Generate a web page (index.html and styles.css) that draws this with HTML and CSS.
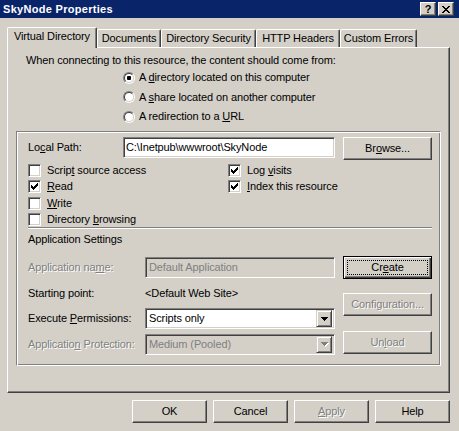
FILE: index.html
```html
<!DOCTYPE html>
<html>
<head>
<meta charset="utf-8">
<title>SkyNode Properties</title>
<link rel="stylesheet" href="styles.css">
</head>
<body>
<div class="window">
  <div class="titlebar">
    <span class="title">SkyNode Properties</span>
    <div class="caption-btns">
      <span class="cbtn cbtn-help">?</span>
      <span class="cbtn">
        <svg class="ico" width="8" height="7" viewBox="0 0 8 7">
          <rect x="0" y="0" width="2" height="1"/><rect x="6" y="0" width="2" height="1"/>
          <rect x="1" y="1" width="2" height="1"/><rect x="5" y="1" width="2" height="1"/>
          <rect x="2" y="2" width="4" height="1"/>
          <rect x="3" y="3" width="2" height="1"/>
          <rect x="2" y="4" width="4" height="1"/>
          <rect x="1" y="5" width="2" height="1"/><rect x="5" y="5" width="2" height="1"/>
          <rect x="0" y="6" width="2" height="1"/><rect x="6" y="6" width="2" height="1"/>
        </svg>
      </span>
    </div>
  </div>

  <div class="tabs">
    <div class="tab tab-active tab-vd">Virtual Directory</div>
    <div class="tab tab-docs">Documents</div>
    <div class="tab tab-sec">Directory Security</div>
    <div class="tab tab-http">HTTP Headers</div>
    <div class="tab tab-err">Custom Errors</div>
  </div>

  <div class="panel">
    <div class="intro">When connecting to this resource, the content should come from:</div>
    <div class="radios">
      <div class="radio-row"><span class="radio"><span class="radio-in"><span class="dot"></span></span></span><span>A <u>d</u>irectory located on this computer</span></div>
      <div class="radio-row"><span class="radio"><span class="radio-in"></span></span><span>A <u>s</u>hare located on another computer</span></div>
      <div class="radio-row"><span class="radio"><span class="radio-in"></span></span><span>A redirection to a <u>U</u>RL</span></div>
    </div>

    <div class="group">
      <div class="path-row">
        <span class="path-label">Lo<u>c</u>al Path:</span>
        <div class="field path-field">C:\Inetpub\wwwroot\SkyNode</div>
        <div class="btn btn-wide">Br<u>o</u>wse...</div>
      </div>

      <div class="checks">
        <div class="check-row"><span class="check"></span><span>Scrip<u>t</u> source access</span></div>
        <div class="check-row"><span class="check checked"><svg class="ico" width="7" height="7" viewBox="0 0 7 7"><rect x="6" y="0" width="1" height="1"/><rect x="5" y="1" width="2" height="1"/><rect x="0" y="2" width="1" height="1"/><rect x="4" y="2" width="3" height="1"/><rect x="0" y="3" width="2" height="1"/><rect x="3" y="3" width="3" height="1"/><rect x="0" y="4" width="5" height="1"/><rect x="1" y="5" width="3" height="1"/><rect x="2" y="6" width="1" height="1"/></svg></span><span>Log <u>v</u>isits</span></div>
        <div class="check-row"><span class="check checked"><svg class="ico" width="7" height="7" viewBox="0 0 7 7"><rect x="6" y="0" width="1" height="1"/><rect x="5" y="1" width="2" height="1"/><rect x="0" y="2" width="1" height="1"/><rect x="4" y="2" width="3" height="1"/><rect x="0" y="3" width="2" height="1"/><rect x="3" y="3" width="3" height="1"/><rect x="0" y="4" width="5" height="1"/><rect x="1" y="5" width="3" height="1"/><rect x="2" y="6" width="1" height="1"/></svg></span><span><u>R</u>ead</span></div>
        <div class="check-row"><span class="check checked"><svg class="ico" width="7" height="7" viewBox="0 0 7 7"><rect x="6" y="0" width="1" height="1"/><rect x="5" y="1" width="2" height="1"/><rect x="0" y="2" width="1" height="1"/><rect x="4" y="2" width="3" height="1"/><rect x="0" y="3" width="2" height="1"/><rect x="3" y="3" width="3" height="1"/><rect x="0" y="4" width="5" height="1"/><rect x="1" y="5" width="3" height="1"/><rect x="2" y="6" width="1" height="1"/></svg></span><span><u>I</u>ndex this resource</span></div>
        <div class="check-row"><span class="check"></span><span><u>W</u>rite</span></div>
        <div class="check-row"></div>
        <div class="check-row"><span class="check"></span><span>Directory <u>b</u>rowsing</span></div>
        <div class="check-row"></div>
      </div>

      <div class="sep"></div>
      <div class="section-title">Application Settings</div>

      <div class="app">
        <div class="app-grid">
          <span class="app-label disabled">Application na<u>m</u>e:</span>
          <div class="field field-disabled">Default Application</div>

          <span class="app-label">Starting point:</span>
          <span class="app-label">&lt;Default Web Site&gt;</span>

          <span class="app-label">Execute <u>P</u>ermissions:</span>
          <div class="field select"><span>Scripts only</span><span class="drop"><svg class="ico" width="7" height="4" viewBox="0 0 7 4"><rect x="0" y="0" width="7" height="1"/><rect x="1" y="1" width="5" height="1"/><rect x="2" y="2" width="3" height="1"/><rect x="3" y="3" width="1" height="1"/></svg></span></div>

          <span class="app-label disabled">Applicatio<u>n</u> Protection:</span>
          <div class="field select field-disabled"><span>Medium (Pooled)</span><span class="drop"><svg class="ico ico-gray" width="7" height="4" viewBox="0 0 7 4"><rect x="0" y="0" width="7" height="1"/><rect x="1" y="1" width="5" height="1"/><rect x="2" y="2" width="3" height="1"/><rect x="3" y="3" width="1" height="1"/></svg></span></div>
        </div>
        <div class="app-btns">
          <div class="btn btn-wide btn-default">Cr<u>e</u>ate</div>
          <div class="btn btn-wide btn-config disabled">Configuration...</div>
          <div class="btn btn-wide btn-unload disabled">Un<u>l</u>oad</div>
        </div>
      </div>
    </div>
  </div>

  <div class="footer">
    <div class="btn">OK</div>
    <div class="btn">Cancel</div>
    <div class="btn disabled"><u>A</u>pply</div>
    <div class="btn">Help</div>
  </div>
</div>
</body>
</html>
```

FILE: styles.css
```css
* { box-sizing: border-box; }
html, body { margin: 0; padding: 0; }
body {
  background: #D4D0C8;
  font-family: "Liberation Sans", Arial, sans-serif;
  font-size: 11px;
  line-height: 13px;
  letter-spacing: -0.12px;
  color: #000;
  width: 459px;
  height: 431px;
  overflow: hidden;
}
u { text-decoration: underline; text-underline-offset: 1px; }
.ico { display: block; fill: #000; shape-rendering: crispEdges; }
.ico-gray { fill: #808080; filter: drop-shadow(1px 1px 0 #fff); }

.window { width: 459px; height: 431px; display: flex; flex-direction: column; }

/* title bar */
.titlebar {
  height: 18px;
  background: #0A246A;
  display: flex;
  align-items: center;
  justify-content: space-between;
  padding: 0 5px 0 3px;
}
.title { color: #fff; font-weight: bold; font-size: 11px; letter-spacing: 0.3px; }
.caption-btns { display: flex; gap: 2px; }
.cbtn {
  width: 16px; height: 14px;
  background: #D4D0C8;
  border: 1px solid;
  border-color: #fff #404040 #404040 #fff;
  box-shadow: inset -1px -1px #808080;
  display: flex; align-items: center; justify-content: center;
}
.cbtn-help { font-weight: bold; font-size: 11px; line-height: 11px; padding-top: 1px; letter-spacing: 0; }

/* tabs */
.tabs {
  margin-top: 9px;
  height: 20px;
  padding-left: 7px;
  display: flex;
  align-items: flex-end;
}
.tab {
  height: 18px;
  border-top: 1px solid #fff;
  border-left: 1px solid #fff;
  border-right: 1px solid #404040;
  border-radius: 2px 2px 0 0;
  box-shadow: inset -1px 0 #808080;
  text-align: center;
  line-height: 17px;
  white-space: nowrap;
}
.tab-active {
  height: 21px;
  margin-bottom: -1px;
  position: relative;
  z-index: 1;
  background: #D4D0C8;
  line-height: 16px;
}
.tab-vd { width: 90px; }
.tab-docs { width: 64px; }
.tab-sec { width: 95px; }
.tab-http { width: 84px; }
.tab-err { width: 77px; }

/* panel */
.panel {
  margin-left: 7px;
  width: 443px;
  height: 346px;
  border: 1px solid;
  border-color: #fff #404040 #404040 #fff;
  box-shadow: inset -1px -1px #808080;
}
.intro { margin: 6px 0 0 18px; white-space: nowrap; }
.radios {
  margin: 4px 0 0 115px;
  display: flex;
  flex-direction: column;
  gap: 6.5px;
}
.radio-row { display: flex; align-items: center; height: 13px; white-space: nowrap; }
.radio {
  width: 12px; height: 12px;
  border-radius: 50%;
  border: 1px solid;
  border-color: #808080 #fff #fff #808080;
  margin-right: 4px;
  display: flex;
}
.radio-in {
  width: 10px; height: 10px;
  border-radius: 50%;
  border: 1px solid;
  border-color: #404040 #D4D0C8 #D4D0C8 #404040;
  background: #fff;
  display: flex; align-items: center; justify-content: center;
}
.dot { width: 4px; height: 4px; border-radius: 1px; background: #000; }

/* group box */
.group {
  margin: 8px 0 0 8px;
  width: 425px;
  height: 235px;
  border: 1px solid;
  border-color: #808080 #fff #fff #808080;
  box-shadow: inset 1px 1px #fff, inset -1px -1px #808080;
}
.path-row { margin: 5px 0 0 11px; display: flex; align-items: flex-start; }
.path-label { width: 95px; line-height: 21px; }
.field {
  height: 21px;
  background: #fff;
  border: 1px solid;
  border-color: #808080 #fff #fff #808080;
  box-shadow: inset 1px 1px #404040, inset -1px -1px #D4D0C8;
  padding: 0 3px;
  line-height: 19px;
  white-space: nowrap;
  overflow: hidden;
}
.path-field { width: 212px; padding-left: 2px; }
.field-disabled { background: #D4D0C8; color: #808080; }

.btn {
  width: 75px; height: 23px;
  border: 1px solid;
  border-color: #fff #404040 #404040 #fff;
  box-shadow: inset -1px -1px #808080;
  display: flex; align-items: center; justify-content: center;
  white-space: nowrap;
  position: relative;
}
.btn-wide { width: 89px; }
.path-row .btn { margin-left: 8px; }
.btn-default {
  border-color: #000;
  box-shadow: inset 1px 1px #fff, inset -1px -1px #404040, inset -2px -2px #808080;
}
.btn-default::after {
  content: "";
  position: absolute;
  left: 3px; top: 3px; right: 3px; bottom: 3px;
  border: 1px dotted #000;
}
.disabled { color: #808080; text-shadow: 1px 1px 0 #fff; }

/* checkboxes */
.checks {
  margin: 2px 0 0 11px;
  display: grid;
  grid-template-columns: 200px 200px;
  grid-template-rows: repeat(4, 16.5px);
}
.check-row { display: flex; align-items: center; gap: 6px; white-space: nowrap; }
.check {
  width: 13px; height: 13px;
  background: #fff;
  border: 1px solid;
  border-color: #808080 #fff #fff #808080;
  box-shadow: inset 1px 1px #404040, inset -1px -1px #D4D0C8;
  display: flex; align-items: center; justify-content: center;
}

.sep {
  margin: -1px 0 0 11px;
  width: 404px;
  height: 2px;
  border-top: 1px solid #808080;
  border-bottom: 1px solid #fff;
}
.section-title { margin: 4px 0 0 11px; }

/* application settings */
.app { margin: 10px 0 0 11px; display: flex; align-items: flex-start; }
.app-grid {
  margin-top: 1px;
  display: grid;
  grid-template-columns: 117px 190px;
  grid-template-rows: 25.5px 25.5px 25.5px 21px;
  align-items: start;
}
.app-label { line-height: 21px; white-space: nowrap; }
.select { display: flex; align-items: center; justify-content: space-between; padding-right: 2px; }
.drop {
  width: 16px; height: 17px;
  background: #D4D0C8;
  border: 1px solid;
  border-color: #D4D0C8 #404040 #404040 #D4D0C8;
  box-shadow: inset 1px 1px #fff, inset -1px -1px #808080;
  display: flex; align-items: center; justify-content: center;
}
.app-btns { margin-left: 8px; display: flex; flex-direction: column; }
.btn-config { margin-top: 14px; }
.btn-unload { margin-top: 15px; }

/* footer */
.footer {
  margin-top: 7px;
  padding-right: 9px;
  display: flex;
  justify-content: flex-end;
  gap: 6px;
}
```
